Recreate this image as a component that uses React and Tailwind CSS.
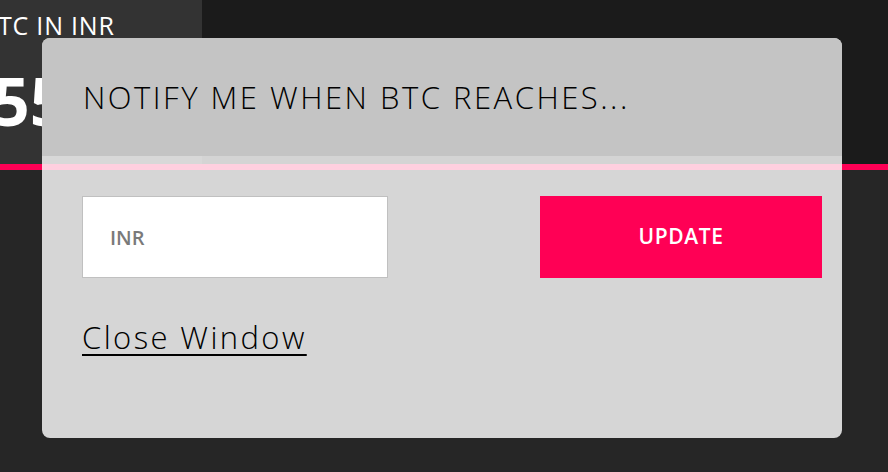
import React from "react";

export default function App() {
  return (
    <div className="relative w-[888px] h-[472px] overflow-hidden bg-[#262626] font-['Open_Sans',sans-serif]">
      <div className="flex h-[164px]">
        <div className="w-[202px] h-full bg-[#333333] overflow-hidden text-white">
          <div className="-ml-[19px] mt-[9px] text-[25px] leading-[32px] font-normal tracking-[0.8px] whitespace-nowrap">BTC IN INR</div>
          <div className="-ml-[8px] mt-[26px] text-[66px] leading-[66px] font-bold whitespace-nowrap">55</div>
        </div>
        <div className="flex-1 bg-[#1b1b1b]" />
      </div>
      <div className="h-[6px] bg-[#ff0055]" />

      {/* alert modal */}
      <div className="absolute left-[42px] top-[38px] w-[800px] h-[400px] rounded-[8px] overflow-hidden flex flex-col bg-[rgba(255,255,255,0.81)]">
        <div className="h-[118px] bg-[#c4c4c4] flex items-center pl-[41px]">
          <h2 className="text-[31px] font-light text-black tracking-[2.5px] whitespace-nowrap">NOTIFY ME WHEN BTC REACHES...</h2>
        </div>
        <div className="pl-[40px] pr-[20px] pt-[40px]">
          <div className="flex justify-between">
            <input
              placeholder="INR"
              className="w-[306px] h-[82px] bg-white border border-[#c0c0c0] px-[27px] text-[20px] font-semibold text-[#333] placeholder:text-[#7a7a7a] outline-none"
            />
            <button className="w-[282px] h-[82px] bg-[#ff0055] text-white text-[21px] font-semibold tracking-[0.6px]">UPDATE</button>
          </div>
          <a href="#" className="inline-block mt-[36px] text-[31px] font-light text-black tracking-[2.4px] underline underline-offset-[5px] decoration-[2px]">Close Window</a>
        </div>
      </div>
    </div>
  );
}
